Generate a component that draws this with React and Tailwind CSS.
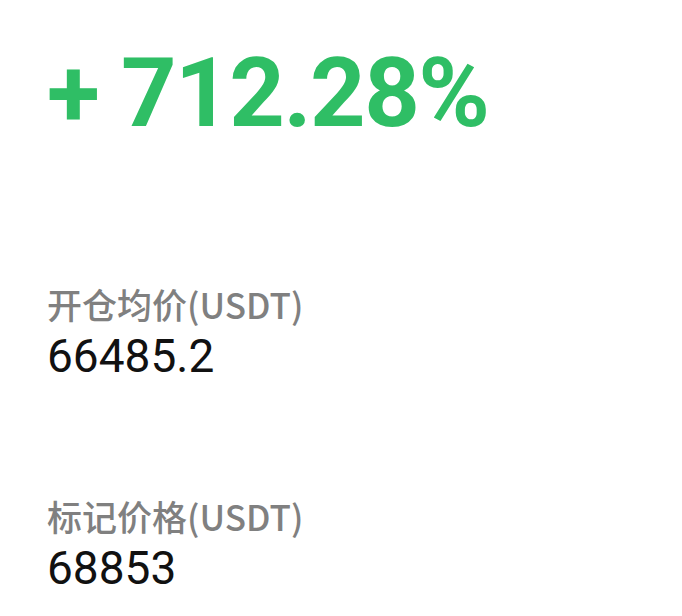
export default function App() {
  return (
    <div className="w-[682px] h-[616px] bg-white overflow-hidden pl-[47px] pt-[38px] flex flex-col">
      <div className="font-['Roboto',sans-serif] text-[97px] leading-[110px] font-bold text-[#2fbe65] tracking-[-1.5px]">
        + 712.28%
      </div>
      <div className="mt-[136px] flex flex-col gap-[7px]">
        <div className="font-['Noto_Sans_CJK_SC',sans-serif] text-[35px] leading-[40px] font-medium text-[#808080]">
          开仓均价(USDT)
        </div>
        <div className="font-['Roboto',sans-serif] text-[46px] leading-[50px] text-[#111111]">
          66485.2
        </div>
      </div>
      <div className="mt-[115px] flex flex-col gap-[7px]">
        <div className="font-['Noto_Sans_CJK_SC',sans-serif] text-[35px] leading-[40px] font-medium text-[#808080]">
          标记价格(USDT)
        </div>
        <div className="font-['Roboto',sans-serif] text-[46px] leading-[50px] text-[#111111]">
          68853
        </div>
      </div>
    </div>
  );
}
